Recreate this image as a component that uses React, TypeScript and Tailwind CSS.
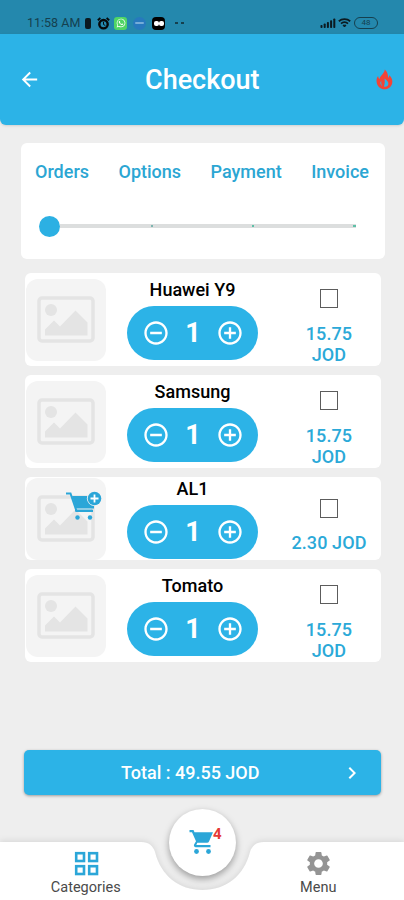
import { useState } from 'react';
import {
  MdAddCircleOutline,
  MdArrowBack,
  MdChevronRight,
  MdRemoveCircleOutline,
  MdSettings,
} from 'react-icons/md';
import { FaWhatsapp } from 'react-icons/fa';

interface Product {
  name: string;
  price: string;
  dragging?: boolean;
}

const steps = ['Orders', 'Options', 'Payment', 'Invoice'];

const products: Product[] = [
  { name: 'Huawei Y9', price: '15.75 JOD' },
  { name: 'Samsung', price: '15.75 JOD' },
  { name: 'AL1', price: '2.30 JOD', dragging: true },
  { name: 'Tomato', price: '15.75 JOD' },
];

const StatusBar = () => (
  <div className="h-[34px] bg-[#2488ad] flex items-start justify-between pt-[15px] pl-[27px] pr-[26px] text-[#15404f]">
    <div className="flex items-center h-4">
      <span className="text-[12.5px] leading-4 w-[56px] whitespace-nowrap">11:58 AM</span>
      <span className="w-[6px] h-[11px] rounded-[2px] bg-[#0b1a20] ml-[2px]" />
      <svg className="ml-[6px]" width="13" height="13" viewBox="0 0 13 13" fill="none" stroke="#06090a">
        <circle cx="6.5" cy="7.2" r="4.2" strokeWidth="2.4" />
        <path d="M6.500 4.800v2.700l1.800 1" strokeWidth="1" />
        <path d="M0.800 3.200 3.400 1M12.200 3.200 9.600 1" strokeWidth="1.800" />
      </svg>
      <span className="w-[13px] h-[13px] ml-[4px] rounded-[3px] bg-[#4fd565] text-white flex items-center justify-center">
        <FaWhatsapp className="w-[10px] h-[10px]" />
      </span>
      <span className="w-[13px] h-[13px] ml-[6px] rounded-full bg-[#2779bd] flex items-center justify-center">
        <span className="w-[9px] h-[2px] bg-[#75acd8] rounded" />
      </span>
      <span className="w-[13px] h-[13px] ml-[6px] rounded-[4px] bg-black flex items-center justify-center">
        <span className="w-[5px] h-[5px] rounded-[2px] bg-white" />
        <span className="w-[5px] h-[5px] rounded-[2px] bg-white" />
      </span>
      <span className="ml-[10px] w-[3px] h-[2px] bg-[#15404f]" />
      <span className="ml-[3px] w-[3px] h-[2px] bg-[#15404f]" />
    </div>
    <div className="flex items-center h-4">
      <svg width="16" height="10" viewBox="0 0 16 10" fill="#0b1a20">
        <rect x="0.5" y="7" width="2" height="3" rx="0.8" />
        <rect x="3.7" y="5.5" width="2" height="4.5" rx="0.8" />
        <rect x="6.9" y="4" width="2" height="6" rx="0.8" />
        <rect x="10.1" y="2.2" width="2" height="7.8" rx="0.8" />
        <rect x="13.3" y="0.5" width="2" height="9.5" rx="0.8" />
      </svg>
      <svg className="ml-[2px]" width="13" height="10" viewBox="0 0 13 10" fill="none" stroke="#0b1a20" strokeWidth="1.8">
        <path d="M0.8 3.2C4 0.4 9 0.4 12.2 3.2" />
        <path d="M3 5.6c2-1.8 5-1.8 7 0" />
        <path d="M5 7.2h3L6.5 9z" fill="#0b1a20" strokeWidth="1" />
      </svg>
      <span className="ml-[3px] w-6 h-3 rounded-full border-[1.5px] border-[#15404f] flex items-center justify-center text-[8px] leading-none">
        48
      </span>
    </div>
  </div>
);

const FlameIcon = () => (
  <svg width="17" height="21" viewBox="0 0 18 22" fill="#f44336">
    <path
      fillRule="evenodd"
      d="M9.3 0.4C9 3 7.6 4.6 6 6.4C4.9 7.6 4 8.8 3.8 10.4C2.9 9.6 2.3 8.4 2.2 7.2C0.8 9 0.4 11 0.6 13C1 17.8 4.6 21.4 9 21.4C13.6 21.4 17.3 17.8 17.3 13.3C17.3 10.6 16 8.3 14 6.6C13.9 7.9 13.5 8.8 12.8 9.4C12.9 5.8 12 2.6 9.3 0.4ZM9 10C11.5 11.8 13.1 13.4 13.1 15.6C13.1 17.5 11.6 18.8 9.8 18.8C9.2 18.8 8.7 18.7 8.3 18.5C9.3 16 9.5 13 9 10ZM5.6 12.5C5.3 14.8 5.7 16.6 7 18C5.2 17.3 4.4 15.8 4.5 14.2C4.6 13.5 5 12.9 5.6 12.5Z"
    />
  </svg>
);

const Header = () => (
  <header className="h-[91px] bg-[#2cb3e7] rounded-b-md shadow-sm flex items-center pl-[18px] pr-[11px]">
    <button aria-label="Back">
      <MdArrowBack className="w-[23px] h-[23px] text-white" />
    </button>
    <h1 className="ml-[104px] mr-auto text-white font-medium text-[27px] leading-8">Checkout</h1>
    <FlameIcon />
  </header>
);

const Stepper = () => (
  <section className="mt-[18px] ml-[21px] w-[364px] h-[116px] bg-white rounded-md pt-[17px]">
    <div className="flex justify-between pl-[14px] pr-[16px] text-[18px] leading-6 font-medium text-[#2ba6d3]">
      {steps.map((step) => (
        <span key={step}>{step}</span>
      ))}
    </div>
    <div className="mt-[31px] ml-[18px] mr-[29px] h-[22px] flex items-center">
      <span className="w-[21px] h-[21px] rounded-full bg-[#2cb0e3]" />
      <div className="flex-1 h-[4px] bg-[#dcdede] flex items-center justify-end gap-[99px]">
        <span className="w-[2px] h-[2px] bg-[#7fb5b0]" />
        <span className="w-[2px] h-[2px] bg-[#5fc0a8]" />
        <span className="w-[3px] h-[2px] bg-[#5fc0a8]" />
      </div>
    </div>
  </section>
);

const Placeholder = ({ dragging }: { dragging?: boolean }) => (
  <div className="relative w-[80px] h-[82px] rounded-xl bg-[#f4f4f4] flex items-center justify-center">
    <svg width="58" height="48" viewBox="0 0 58 48">
      <rect x="2" y="2" width="54" height="43" rx="3" fill="#f4f4f4" stroke="#e4e4e4" strokeWidth="3.5" />
      <circle cx="14" cy="14" r="6" fill="#e4e4e4" />
      <path d="M8 39.5v-6l9-9 6 6L38.500 14.500 50.500 26.500v13z" fill="#e4e4e4" />
    </svg>
    {dragging && (
      <svg className="absolute left-[39px] top-[13px]" width="38" height="32" viewBox="0 0 38 32">
        <path d="M1 2.500h4.500l6 17.500h16.500" fill="none" stroke="#2ba6d8" strokeWidth="2" />
        <path d="M7 5h22v12.500H11z" fill="#2ba6d8" />
        <path d="M10 19.500h17.500" stroke="#2ba6d8" strokeWidth="2" />
        <circle cx="12.500" cy="26.500" r="2.200" fill="#2ba6d8" />
        <circle cx="25" cy="26.500" r="2.200" fill="#2ba6d8" />
        <circle cx="29.500" cy="7.500" r="7.600" fill="#f4f4f4" />
        <circle cx="29.500" cy="7.500" r="6.800" fill="#2ba6d8" />
        <path d="M29.500 3.500v8M25.500 7.500h8" stroke="#fff" strokeWidth="1.800" />
      </svg>
    )}
  </div>
);

const ProductRow = ({ product }: { product: Product }) => {
  const [count, setCount] = useState(1);
  const [checked, setChecked] = useState(false);

  return (
    <li className={`bg-white rounded-md flex items-center pl-px ${product.dragging ? 'h-[83px]' : 'h-[93px]'}`}>
      <Placeholder dragging={product.dragging} />
      <div className="ml-[21px] w-[131px] flex flex-col items-center pb-[2px]">
        <h2 className="h-7 text-[18px] leading-[23px] font-medium text-black">{product.name}</h2>
        <div className="w-full h-[54px] rounded-full bg-[#2cb3e7] text-white flex items-center justify-between pl-[15px] pr-[14px]">
          <button aria-label="Remove one" onClick={() => setCount(Math.max(0, count - 1))}>
            <MdRemoveCircleOutline className="w-7 h-7" />
          </button>
          <span className="text-[27px] leading-8 font-bold">{count}</span>
          <button aria-label="Add one" onClick={() => setCount(count + 1)}>
            <MdAddCircleOutline className="w-7 h-7" />
          </button>
        </div>
      </div>
      <div className="ml-[31px] w-20 flex flex-col items-center">
        <button
          role="checkbox"
          aria-checked={checked}
          aria-label={product.name}
          className="h-12 flex items-center"
          onClick={() => setChecked(!checked)}
        >
          <span className={`w-[18px] h-[19px] border-[1.5px] border-[#5c5c5c] ${checked ? 'bg-[#2cb3e7]' : ''}`} />
        </button>
        <span className={`text-[18px] leading-[21px] font-medium tracking-[0.1px] text-center text-[#2ba9d8] ${product.dragging ? 'whitespace-nowrap' : 'w-[60px]'}`}>
          {product.price}
        </span>
      </div>
    </li>
  );
};

const GridIcon = () => (
  <svg className="ml-px" width="25" height="25" viewBox="0 0 25 25" fill="none" stroke="#2ba6d8" strokeWidth="2.600">
    <rect x="2.200" y="2.200" width="7.800" height="7.800" />
    <rect x="15.200" y="2.200" width="7.800" height="7.800" />
    <rect x="2.200" y="15.200" width="7.800" height="7.800" />
    <rect x="15.200" y="15.200" width="7.800" height="7.800" />
  </svg>
);

const CartIcon = () => (
  <svg className="absolute left-[20px] top-[20px]" width="26" height="26" viewBox="0 0 26 26" fill="#2ba6d8">
    <path d="M0.500 1h4l1 2.200H24L20 12.500q-0.500 1.200-2 1.200H8.300L7.300 16H21.500v2.200H6.500q-2.200-0.400-1.400-2.600L7 12.300 3 3.200H0.500z" />
    <circle cx="7.500" cy="22.500" r="2.400" />
    <circle cx="19.500" cy="22.500" r="2.400" />
  </svg>
);

const BottomNav = () => (
  <nav className="relative h-[58px] flex text-[14.5px] leading-5 text-[#4a4a4a]">
    <svg className="absolute left-0 top-0 drop-shadow-[0_-1px_3px_rgba(0,0,0,0.1)]" width="404" height="58" viewBox="0 0 404 58" fill="#fff">
      <path d="M0 0H141C149 0 153 4 155 10C161 34 179 48 202.500 48S244 34 250 10C252 4 256 0 264 0H404V58H0Z" />
    </svg>
    <a className="relative w-[172px] flex flex-col items-center pt-[9px]">
      <GridIcon />
      <span className="mt-[2px]">Categories</span>
    </a>
    <button
      aria-label="Cart"
      className="absolute left-[169px] top-[-33px] w-[67px] h-[67px] rounded-full bg-white shadow-[0_3px_7px_rgba(0,0,0,0.35)]"
    >
      <CartIcon />
      <span className="absolute left-[44px] top-[16px] text-[15px] leading-[18px] font-bold text-[#e53935]">4</span>
    </button>
    <a className="relative ml-[61px] w-[172px] flex flex-col items-center pt-[7px]">
      <MdSettings className="ml-px w-[29px] h-[29px] text-[#949494]" />
      <span>Menu</span>
    </a>
  </nav>
);

export default function App() {
  return (
    <div className="w-[404px] h-[900px] overflow-hidden bg-[#eeeeee] font-['Roboto',sans-serif] flex flex-col">
      <StatusBar />
      <Header />
      <Stepper />
      <ul className="mt-[14px] ml-[25px] w-[356px] flex flex-col gap-[9px]">
        {products.map((product) => (
          <ProductRow key={product.name} product={product} />
        ))}
      </ul>
      <div className="mt-auto">
        <button className="ml-6 mb-[47px] w-[357px] h-[45px] rounded-[5px] bg-[#2cb3e7] shadow-[0_1px_3px_rgba(0,0,0,0.35)] text-white flex items-center pl-[97px] pr-[17px]">
          <span className="text-[18px] leading-6 font-medium">Total : 49.55 JOD</span>
          <MdChevronRight className="ml-auto w-6 h-6" />
        </button>
        <BottomNav />
      </div>
    </div>
  );
}
